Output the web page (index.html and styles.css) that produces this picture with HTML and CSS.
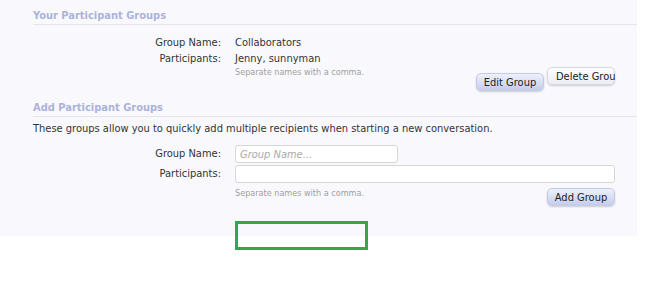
FILE: index.html
```html
<!DOCTYPE html>
<html lang="en">
<head>
  <meta charset="UTF-8">
  <title>Participant Groups</title>
  <link rel="stylesheet" href="styles.css">
</head>
<body>
  <div class="panel">
    <h2 class="heading">Your Participant Groups</h2>
    <div class="form first">
      <div class="label">Group Name:</div>
      <div class="value">Collaborators</div>
      <div class="label">Participants:</div>
      <div class="value">Jenny, sunnyman</div>
      <div></div>
      <div class="value actions">
        <p class="hint">Separate names with a comma.</p>
        <div class="buttons">
          <button class="button primary edit">Edit Group</button>
          <button class="button delete">Delete Grou</button>
        </div>
      </div>
    </div>

    <h2 class="heading">Add Participant Groups</h2>
    <p class="explain">These groups allow you to quickly add multiple recipients when starting a new conversation.</p>
    <div class="form second">
      <label class="label" for="group-name">Group Name:</label>
      <div class="value"><input id="group-name" class="text short" type="text" placeholder="Group Name..."></div>
      <label class="label" for="participants">Participants:</label>
      <div class="value"><input id="participants" class="text" type="text"></div>
      <div></div>
      <div class="value actions">
        <p class="hint">Separate names with a comma.</p>
        <div class="buttons">
          <button class="button primary add">Add Group</button>
        </div>
      </div>
    </div>
  </div>
  <div class="highlight"></div>
</body>
</html>
```

FILE: styles.css
```css
body {
  margin: 0;
  background: #fff;
  font-family: "DejaVu Sans Condensed", "DejaVu Sans", sans-serif;
  font-size: 11px;
  color: #333;
}
.panel {
  width: 637px;
  height: 236px;
  background: #f9f9fd;
}
.heading {
  margin: 0 0 0 33px;
  padding-top: 8px;
  font-size: 11px;
  line-height: 16px;
  font-weight: bold;
  color: #abb3da;
  border-bottom: 1px solid #e3e5ee;
}
.heading + .form {
  margin-top: 10px;
}
.form + .heading {
  margin-top: 1px;
}
.form {
  display: grid;
  grid-template-columns: 221px 380px;
  column-gap: 14px;
}
.label {
  text-align: right;
  line-height: 16px;
}
.value {
  line-height: 16px;
}
.actions {
  display: flex;
  justify-content: space-between;
  align-items: flex-start;
}
.hint {
  margin: 0;
  font-size: 9px;
  line-height: 11px;
  color: #a0a0a0;
}
.buttons {
  display: flex;
  gap: 3px;
}
.button {
  width: 68px;
  height: 18px;
  padding: 0 0 0 8px;
  font-family: inherit;
  font-size: 11px;
  color: #222;
  text-align: left;
  white-space: nowrap;
  border: 1px solid #d4d8e6;
  border-radius: 5px;
  background: linear-gradient(#fdfdff, #eceef4);
  box-shadow: 0 1px 2px rgba(0, 0, 0, 0.18);
}
.primary {
  text-align: center;
  padding: 0;
  border-color: #c3cbe6;
  background: linear-gradient(#eef1fb, #c4cdeb);
}
.edit {
  margin-top: 6px;
}
.second .actions {
  margin-top: 2px;
}
.second .hint {
  margin-top: 1px;
}
.add {
  margin-top: 1px;
}
.explain {
  margin: 4px 0 0 33px;
  line-height: 16px;
}
.second {
  margin-top: 8px;
  row-gap: 2px;
}
.second .label {
  line-height: 18px;
}
.text {
  box-sizing: border-box;
  width: 380px;
  height: 18px;
  margin: 0;
  padding: 0 4px;
  font-family: inherit;
  font-size: 11px;
  border: 1px solid #d6d6d6;
  border-radius: 3px;
  background: #fff;
}
.text.short {
  width: 163px;
}
.text::placeholder {
  color: #aaa;
  font-style: italic;
}
.highlight {
  width: 127px;
  height: 23px;
  margin: -15px 0 0 235px;
  border: 3px solid #2fa84f;
}
```
